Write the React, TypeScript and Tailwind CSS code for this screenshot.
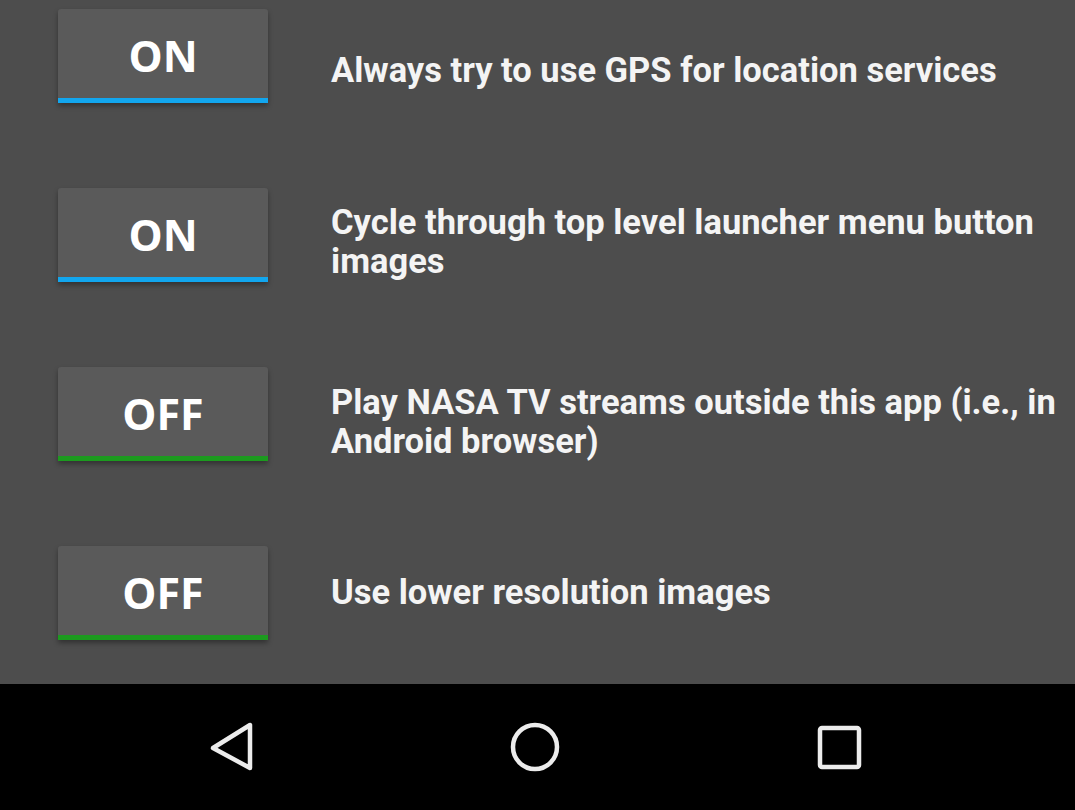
import React from 'react';

interface SettingRowProps {
  on: boolean;
  label: React.ReactNode;
  textOffset: string;
}

const ToggleButton: React.FC<{ on: boolean }> = ({ on }) => (
  <div className="relative flex h-[94px] w-[210px] shrink-0 flex-col rounded-t-[3px] bg-[#5a5a5a] shadow-[0_3px_5px_rgba(0,0,0,0.35)]">
    <div className="flex flex-1 items-center justify-center pt-[4px] font-['Open_Sans',sans-serif] text-[43px] font-bold leading-none text-white">
      {on ? 'ON' : 'OFF'}
    </div>
    <div className={`h-[5px] w-full ${on ? 'bg-[#12a6ee]' : 'bg-[#1c9a1f]'}`} />
  </div>
);

const SettingRow: React.FC<SettingRowProps> = ({ on, label, textOffset }) => (
  <div className="flex h-[179px] items-start">
    <ToggleButton on={on} />
    <div
      className={`ml-[63px] whitespace-nowrap font-['Roboto',sans-serif] text-[34.5px] font-bold leading-[39px] text-[#f4f4f4] ${textOffset}`}
    >
      {label}
    </div>
  </div>
);

const NavBar: React.FC = () => (
  <div className="h-[126px] w-full bg-black">
    <svg width="1075" height="126" viewBox="0 0 1075 126" className="block">
      <path
        d="M250 41 L250 84 L213 64 Z"
        fill="none"
        stroke="#ececec"
        strokeWidth="4.5"
        strokeLinejoin="round"
      />
      <circle cx="535" cy="63" r="22" fill="none" stroke="#ececec" strokeWidth="4.5" />
      <rect x="820" y="44" width="39" height="39" rx="2" fill="none" stroke="#ececec" strokeWidth="4.5" />
    </svg>
  </div>
);

export default function App() {
  return (
    <div className="flex h-[810px] w-[1075px] flex-col overflow-hidden bg-[#4d4d4d]">
      <div className="h-[684px] pl-[58px] pt-[9px]">
        <SettingRow on label="Always try to use GPS for location services" textOffset="mt-[42px]" />
        <SettingRow
          on
          label={
            <>
              Cycle through top level launcher menu button
              <br />
              images
            </>
          }
          textOffset="mt-[15px]"
        />
        <SettingRow
          on={false}
          label={
            <>
              Play NASA TV streams outside this app (i.e., in
              <br />
              Android browser)
            </>
          }
          textOffset="mt-[16px]"
        />
        <SettingRow on={false} label="Use lower resolution images" textOffset="mt-[27px]" />
      </div>
      <NavBar />
    </div>
  );
}
